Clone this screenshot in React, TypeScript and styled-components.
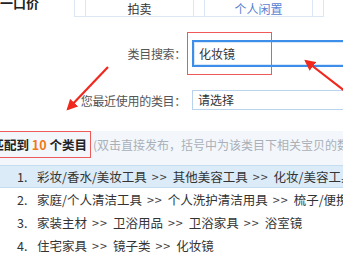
import React from "react";
import styled, { createGlobalStyle } from "styled-components";

const GlobalStyle = createGlobalStyle`
  html, body {
    margin: 0;
    padding: 0;
    background: #fff;
    overflow: hidden;
  }
  body {
    font-family: "Noto Sans CJK SC", "Noto Sans", sans-serif;
    color: #333;
  }
`;

const categories = [
  ["彩妆/香水/美妆工具", "其他美容工具", "化妆/美容工具", "化妆镜"],
  ["家庭/个人清洁工具", "个人洗护清洁用具", "梳子/便携用品"],
  ["家装主材", "卫浴用品", "卫浴家具", "浴室镜"],
  ["住宅家具", "镜子类", "化妆镜"],
];

const App = () => {
  return (
    <Page>
      <GlobalStyle />
      <Header>
        <Title>一口价</Title>
        <TabStrip>
          <TabGap />
          <Tab>拍卖</Tab>
          <TabGap />
          <Tab $active>个人闲置</Tab>
          <TabGap />
        </TabStrip>
      </Header>

      <FormRow $top={23}>
        <Label>类目搜索：</Label>
        <SearchInput defaultValue="化妆镜" />
      </FormRow>
      <FormRow $top={23}>
        <Label>您最近使用的类目：</Label>
        <SelectBox>请选择</SelectBox>
      </FormRow>

      <MatchBar>
        <MatchCount>
          已匹配到 <Num>10</Num> 个类目
        </MatchCount>
        <Hint>(双击直接发布，括号中为该类目下相关宝贝的数量)</Hint>
      </MatchBar>

      <List>
        {categories.map((parts, i) => (
          <Item key={i} $selected={i === 0}>
            <Index>{i + 1}.</Index>
            {parts.map((p, j) => (
              <React.Fragment key={p + j}>
                {j > 0 && <Sep>&gt;&gt;</Sep>}
                <span>{p}</span>
              </React.Fragment>
            ))}
          </Item>
        ))}
      </List>

      <Highlight />
      <Arrows viewBox="0 0 343 270" width="343" height="270">
        <defs>
          <marker id="head" viewBox="0 0 10 10" refX="8" refY="5" markerWidth="5" markerHeight="5" orient="auto">
            <path d="M0 0 L10 5 L0 10 z" fill="#f0281e" />
          </marker>
        </defs>
        <line x1="108" y1="67" x2="68" y2="109" stroke="#f0281e" strokeWidth="2.2" markerEnd="url(#head)" />
        <line x1="350" y1="95" x2="306" y2="61" stroke="#f0281e" strokeWidth="2.2" markerEnd="url(#head)" />
      </Arrows>
    </Page>
  );
};

const Page = styled.div`
  position: relative;
  width: 343px;
  height: 270px;
  overflow: hidden;
  white-space: nowrap;
`;

const Header = styled.div`
  display: flex;
  align-items: flex-start;
  height: 17px;
`;

const Title = styled.div`
  flex: none;
  width: 74px;
  margin-top: -6px;
  font-size: 13px;
  font-weight: bold;
  color: #222;
  line-height: 17px;
`;

const TabStrip = styled.div`
  display: flex;
  flex: none;
  height: 16px;
  border-left: 1px solid #dde7f4;
  border-bottom: 1px solid #dde7f4;
`;

const TabGap = styled.div`
  flex: none;
  width: 10px;
  border-right: 1px solid #dde7f4;
`;

const Tab = styled.div<{ $active?: boolean }>`
  flex: none;
  width: 107px;
  border-right: 1px solid #dde7f4;
  text-align: center;
  font-size: 12px;
  line-height: 17px;
  color: ${(p) => (p.$active ? "#5b7fd2" : "#333")};
`;

const FormRow = styled.div<{ $top: number }>`
  display: flex;
  align-items: center;
  margin-top: ${(p) => p.$top}px;
`;

const Label = styled.div`
  flex: none;
  width: 192px;
  padding-right: 6px;
  box-sizing: border-box;
  text-align: right;
  font-size: 12px;
  color: #555;
  letter-spacing: -0.3px;
`;

const SearchInput = styled.input`
  flex: none;
  width: 180px;
  height: 27px;
  box-sizing: border-box;
  border: 2px solid #3d8ee8;
  border-right: none;
  outline: none;
  padding: 0 5px;
  font-family: inherit;
  font-size: 12px;
  color: #333;
  background: #fff;
  box-shadow: inset 0 0 0 1px #d8e8fa;
`;

const SelectBox = styled.div`
  flex: none;
  width: 180px;
  height: 20px;
  box-sizing: border-box;
  border: 1px solid #b9d3ef;
  border-right: none;
  padding: 0 5px;
  font-size: 12px;
  line-height: 18px;
  color: #333;
`;

const MatchBar = styled.div`
  display: flex;
  align-items: flex-start;
  margin-top: 21px;
  height: 34px;
  background: #f3f7fc;
  margin-left: -21px;
`;

const MatchCount = styled.div`
  flex: none;
  width: 112px;
  height: 27px;
  box-sizing: border-box;
  border: 1px solid #ee5a5a;
  border-left: none;
  font-size: 12.5px;
  font-weight: bold;
  line-height: 25px;
  color: #222;
  text-align: right;
  padding-right: 6px;
`;

const Num = styled.span`
  color: #f07818;
`;

const Hint = styled.div`
  margin-left: 2px;
  font-size: 12px;
  line-height: 27px;
  color: #aab0b8;
`;

const List = styled.div`
  display: flex;
  flex-direction: column;
`;

const Item = styled.div<{ $selected?: boolean }>`
  display: flex;
  align-items: center;
  height: 23px;
  box-sizing: border-box;
  padding-left: 17px;
  font-size: 12.5px;
  color: #333;
  background: ${(p) => (p.$selected ? "#dcebf8" : "transparent")};
  border-top: 1px solid ${(p) => (p.$selected ? "#c4dcf2" : "transparent")};
  border-bottom: 1px solid ${(p) => (p.$selected ? "#c4dcf2" : "transparent")};

  span {
    flex: none;
  }
`;

const Index = styled.span`
  width: 20px;
`;

const Sep = styled.span`
  margin: 0 5px;
  letter-spacing: 1px;
  color: #444;
`;

const Highlight = styled.div`
  position: absolute;
  left: 187px;
  top: 32px;
  width: 85px;
  height: 43px;
  box-sizing: border-box;
  border: 1.5px solid #ee5a5a;
  pointer-events: none;
`;

const Arrows = styled.svg`
  position: absolute;
  left: 0;
  top: 0;
  pointer-events: none;
`;

export default App;
